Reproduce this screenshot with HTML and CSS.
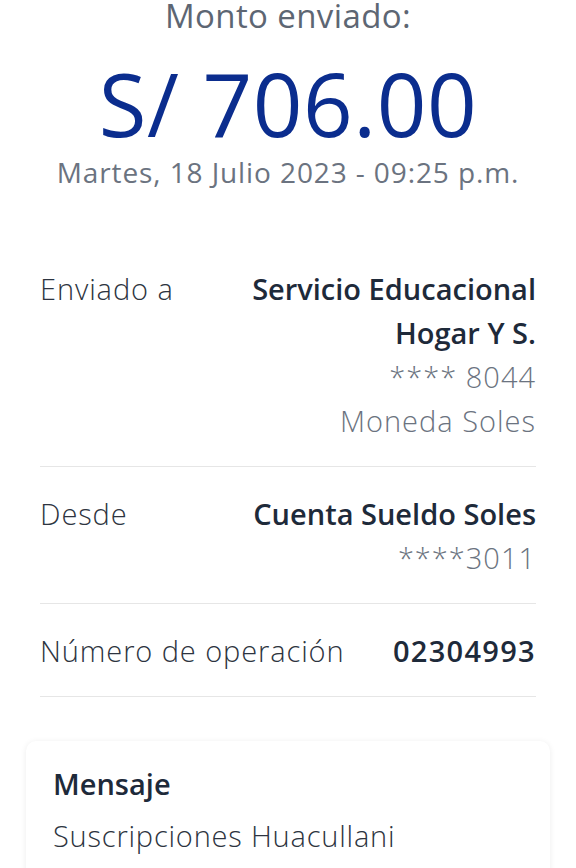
FILE: index.html
```html
<!DOCTYPE html>
<html lang="es">
<head>
  <meta charset="UTF-8" />
  <title>Constancia de envío</title>
  <link rel="stylesheet" href="styles.css">
</head>
<body>

<div class="resumen">
  <p class="titulo">Monto enviado:</p>
  <p class="monto">S/ 706.00</p>
  <p class="fecha">Martes, 18 Julio 2023 - 09:25 p.m.</p>
</div>

<div class="detalle">
  <div class="fila">
    <span class="etiqueta">Enviado a</span>
    <div class="valor">
      <strong>Servicio Educacional<br>Hogar Y S.</strong>
      <span class="sub">**** 8044</span>
      <span class="sub">Moneda Soles</span>
    </div>
  </div>

  <div class="fila">
    <span class="etiqueta">Desde</span>
    <div class="valor">
      <strong>Cuenta Sueldo Soles</strong>
      <span class="sub">****3011</span>
    </div>
  </div>

  <div class="fila">
    <span class="etiqueta">Número de operación</span>
    <div class="valor">
      <strong class="operacion">02304993</strong>
    </div>
  </div>
</div>

<div class="mensaje">
  <h2>Mensaje</h2>
  <p>Suscripciones Huacullani</p>
</div>

</body>
</html>
```

FILE: styles.css
```css
body {
  font-family: "Open Sans", Arial, sans-serif;
  background: #ffffff;
  margin: 0;
  padding: 0 40px;
  color: #2d3440;
}

p {
  margin: 0;
}

.resumen {
  text-align: center;
}

.titulo {
  font-size: 33px;
  line-height: 36px;
  margin-top: -2px;
  letter-spacing: 0.4px;
  color: #5d6673;
}

.monto {
  font-size: 87px;
  line-height: 100px;
  margin-top: 19px;
  letter-spacing: 0.5px;
  color: #0b2d8e;
}

.fecha {
  font-size: 28px;
  line-height: 36px;
  letter-spacing: 0.9px;
  margin-top: 1px;
  color: #6b7380;
}

.detalle {
  margin-top: 52px;
}

.fila {
  display: flex;
  justify-content: space-between;
  padding: 25px 0 23px;
  border-bottom: 1px solid #e6e6e6;
  font-size: 29px;
  line-height: 44px;
}

.etiqueta {
  font-weight: 300;
  letter-spacing: 0.9px;
  color: #2d3440;
}

.valor {
  display: flex;
  flex-direction: column;
  text-align: right;
}

.valor strong {
  font-weight: 600;
  color: #1e2a3a;
}

.valor .operacion {
  letter-spacing: 1.3px;
}

.sub {
  font-weight: 300;
  letter-spacing: 1px;
  color: #6b7380;
}

.mensaje {
  margin: 44px -14px 0;
  padding: 23px 27px 40px;
  background: #ffffff;
  border-radius: 10px;
  box-shadow: 0 1px 6px rgba(0, 0, 0, 0.08);
}

.mensaje h2 {
  margin: 0;
  font-size: 29px;
  line-height: 40px;
  font-weight: 600;
  color: #1e2a3a;
}

.mensaje p {
  margin-top: 6px;
  font-size: 29px;
  line-height: 52px;
  font-weight: 300;
  letter-spacing: 0.8px;
}
```
